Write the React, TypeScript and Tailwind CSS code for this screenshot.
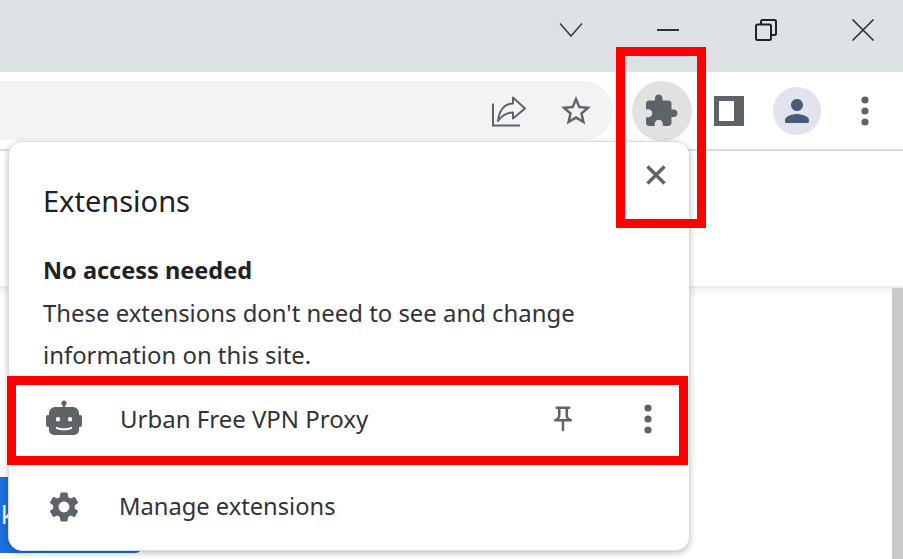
import React from 'react';

const font = { fontFamily: '"Noto Sans", "Open Sans", sans-serif' };

const Dots: React.FC<{ className?: string }> = ({ className }) => (
  <svg width="24" height="36" viewBox="0 0 24 36" className={className} fill="#5f6368">
    <circle cx="12" cy="7" r="3.6" />
    <circle cx="12" cy="18" r="3.6" />
    <circle cx="12" cy="29" r="3.6" />
  </svg>
);

const WindowControls = () => (
  <div className="h-[72px] bg-[#dee1e6] flex justify-end items-center gap-[73.5px] pr-[28px] pb-[12px] text-[#333]">
    {/* chevron */}
    <svg width="24" height="24" viewBox="0 0 24 24" fill="none" stroke="#3c4043" strokeWidth="1.6">
      <path d="M1 5.5 12 18 23 5.5" />
    </svg>
    {/* minimize */}
    <svg width="24" height="24" viewBox="0 0 24 24" fill="none" stroke="#333" strokeWidth="2">
      <path d="M1 12h22" />
    </svg>
    {/* restore */}
    <svg width="24" height="24" viewBox="0 0 24 24" fill="none" stroke="#222" strokeWidth="2">
      <rect x="2" y="6.5" width="15" height="15.5" rx="1.5" />
      <path d="M7 6V3.5A1.5 1.5 0 0 1 8.5 2h12A1.5 1.5 0 0 1 22 3.5v12a1.5 1.5 0 0 1-1.5 1.5H17" />
    </svg>
    {/* close */}
    <svg width="24" height="24" viewBox="0 0 24 24" fill="none" stroke="#333" strokeWidth="1.7">
      <path d="M1.5 1.5l21 21M22.5 1.5l-21 21" />
    </svg>
  </div>
);

const Toolbar = () => (
  <div className="h-[79px] bg-white border-b-2 border-[#dadce0] flex items-center">
    <div className="w-[613px] h-[59px] bg-[#f1f3f4] rounded-r-full flex items-center justify-end gap-[31px] pr-[19px]">
      {/* share */}
      <svg width="36" height="36" viewBox="0 0 36 36" fill="none" stroke="#5f6368" strokeWidth="2">
        <path d="M2 10.5v22h27" />
        <path d="M7 28c1-10 6-17.5 15-17.5v-6l12 11-12 10v-6c-6 0-11 3-15 8.5z" strokeLinejoin="round" />
      </svg>
      {/* star */}
      <svg width="36" height="36" viewBox="0 0 24 24" fill="#5f6368">
        <path d="M22 9.24l-7.19-.62L12 2 9.19 8.63 2 9.24l5.46 4.73L5.82 21 12 17.27 18.18 21l-1.63-7.03L22 9.24zM12 15.4l-3.76 2.27 1-4.28-3.32-2.88 4.38-.38L12 6.1l1.71 4.04 4.38.38-3.32 2.88 1 4.28L12 15.4z" />
      </svg>
    </div>
    {/* extensions puzzle */}
    <div className="ml-[19px] w-[60px] h-[60px] pr-[2px] rounded-full bg-[#e2e2e3] flex items-center justify-center">
      <svg width="36" height="36" viewBox="0 0 24 24" fill="#5f6368">
        <path d="M20.5 11H19V7c0-1.1-.9-2-2-2h-4V3.5C13 2.12 11.88 1 10.5 1S8 2.12 8 3.5V5H4c-1.1 0-1.99.9-1.99 2v3.8H3.5c1.49 0 2.7 1.21 2.7 2.7s-1.21 2.7-2.7 2.7H2V20c0 1.1.9 2 2 2h3.8v-1.5c0-1.49 1.21-2.7 2.7-2.7 1.49 0 2.7 1.21 2.7 2.7V22H17c1.1 0 2-.9 2-2v-4h1.5c1.38 0 2.5-1.12 2.5-2.5S21.88 11 20.5 11z" />
      </svg>
    </div>
    {/* side panel */}
    <svg className="ml-[22px]" width="30" height="30" viewBox="0 0 30 30">
      <path fill="#5f6368" fillRule="evenodd" d="M0 0h30v30H0zM5 5v20h15V5z" />
    </svg>
    {/* profile */}
    <div className="ml-[29px] w-[48px] h-[48px] rounded-full bg-[#e1e4ec] flex items-center justify-center">
      <svg width="36" height="36" viewBox="0 0 24 24" fill="#4a5a78">
        <path d="M12 12c2.21 0 4-1.79 4-4s-1.79-4-4-4-4 1.79-4 4 1.79 4 4 4zm0 2c-2.67 0-8 1.34-8 4v1a1 1 0 0 0 1 1h14a1 1 0 0 0 1-1v-1c0-2.66-5.33-4-8-4z" />
      </svg>
    </div>
    <Dots className="ml-[32px]" />
  </div>
);

const PageBehind = () => (
  <div className="flex-1 bg-white flex flex-col">
    <div className="h-[137px] border-b-2 border-[#ececec]" />
    <div className="flex-1 flex">
      <div className="flex-1 flex flex-col">
        <div className="h-[10px] bg-gradient-to-b from-[#f3f3f3] to-white" />
        <div className="mt-[179px] w-[143px] h-[76px] bg-[#1a6fdc] rounded-br-lg flex items-center">
          <span className="text-white text-[25px] ml-[1px]" style={font}>k</span>
        </div>
      </div>
      <div className="w-[11px] bg-[#c9c9c9]" />
    </div>
  </div>
);

const RobotIcon = () => (
  <svg width="38" height="40" viewBox="0 0 38 40" fill="#5f6368">
    <circle cx="19" cy="4" r="2.6" />
    <rect x="17.8" y="4" width="2.4" height="6" />
    <path
      fillRule="evenodd"
      d="M10 8h18a6 6 0 0 1 6 6v2h1a2 2 0 0 1 2 2v8a2 2 0 0 1-2 2h-1v3a5 5 0 0 1-5 5H9a5 5 0 0 1-5-5v-3H3a2 2 0 0 1-2-2v-8a2 2 0 0 1 2-2h1v-2a6 6 0 0 1 6-6zM13 18a2.2 2.2 0 1 0 0 4.4 2.2 2.2 0 0 0 0-4.4zM25 18a2.2 2.2 0 1 0 0 4.4 2.2 2.2 0 0 0 0-4.4zM11 27.5c2 2.4 14 2.4 16 0v2c-2 2.4-14 2.4-16 0z"
    />
  </svg>
);

const ExtensionsPopup = () => (
  <div
    className="absolute left-[8px] top-[141px] w-[682px] h-[410px] bg-white rounded-[14px] border border-[#dcdcdc] shadow-[0_2px_6px_rgba(0,0,0,0.25)] flex flex-col text-[#202124]"
    style={font}
  >
    <div className="flex items-start justify-between pl-[34px] pr-[18px] pt-[39px]">
      <div className="text-[29px] leading-[40px]">Extensions</div>
      <svg className="-mt-[21px]" width="30" height="30" viewBox="0 0 30 30" fill="none" stroke="#5f6368" strokeWidth="3.4">
        <path d="M6.5 6.5l17 17M23.5 6.5l-17 17" />
      </svg>
    </div>
    <div className="pl-[34px] pr-[20px] pt-[30px]">
      <div className="text-[23.5px] leading-[38px] font-bold">No access needed</div>
      <div className="text-[23.9px] leading-[42px] text-[#303338] mt-[3px]">
        These extensions don't need to see and change
        <br />
        information on this site.
      </div>
    </div>
    <div className="mt-px h-[87px] flex items-center text-[24px] text-[#303338] border-b border-[#dadce0] pl-[36px] pb-[3px]">
      <RobotIcon />
      <span className="ml-[37px] flex-1">Urban Free VPN Proxy</span>
      <svg width="30" height="30" viewBox="0 0 24 24" fill="#5f6368">
        <path d="M14 4v5c0 1.12.37 2.16 1 3H9c.65-.86 1-1.9 1-3V4h4m3-2H7c-.55 0-1 .45-1 1s.45 1 1 1h1v5c0 1.66-1.34 3-3 3v2h5.97v7l1 1 1-1v-7H19v-2c-1.66 0-3-1.34-3-3V4h1c.55 0 1-.45 1-1s-.45-1-1-1z" />
      </svg>
      <Dots className="ml-[58px] mr-[29px]" />
    </div>
    <div className="flex-1 flex items-center text-[23.7px] text-[#303338] pl-[37px] pb-[1px]">
      <svg width="36" height="36" viewBox="0 0 24 24" fill="#5f6368">
        <path d="M19.14 12.94c.04-.3.06-.61.06-.94 0-.32-.02-.64-.07-.94l2.03-1.58c.18-.14.23-.41.12-.61l-1.92-3.32c-.12-.22-.37-.29-.59-.22l-2.39.96c-.5-.38-1.03-.7-1.62-.94l-.36-2.54c-.04-.24-.24-.41-.48-.41h-3.84c-.24 0-.43.17-.47.41l-.36 2.54c-.59.24-1.13.57-1.62.94l-2.39-.96c-.22-.08-.47 0-.59.22L2.74 8.87c-.12.21-.08.47.12.61l2.03 1.58c-.05.3-.09.63-.09.94s.02.64.07.94l-2.03 1.58c-.18.14-.23.41-.12.61l1.92 3.32c.12.22.37.29.59.22l2.39-.96c.5.38 1.03.7 1.62.94l.36 2.54c.05.24.24.41.48.41h3.84c.24 0 .44-.17.47-.41l.36-2.54c.59-.24 1.13-.56 1.62-.94l2.39.96c.22.08.47 0 .59-.22l1.92-3.32c.12-.22.07-.47-.12-.61l-2.01-1.58zM12 15.6c-1.98 0-3.6-1.62-3.6-3.6s1.62-3.6 3.6-3.6 3.6 1.62 3.6 3.6-1.62 3.6-3.6 3.6z" />
      </svg>
      <span className="ml-[37px]">Manage extensions</span>
    </div>
  </div>
);

const App: React.FC = () => {
  return (
    <div className="relative w-[903px] h-[559px] overflow-hidden flex flex-col bg-white">
      <WindowControls />
      <Toolbar />
      <PageBehind />
      <ExtensionsPopup />
      {/* red annotation boxes */}
      <div className="absolute left-[616px] top-[47px] w-[90px] h-[181px] border-[9.5px] border-[#ff0000]" />
      <div className="absolute left-[7px] top-[376px] w-[681px] h-[89px] border-[9.5px] border-[#ff0000]" />
    </div>
  );
};

export default App;
